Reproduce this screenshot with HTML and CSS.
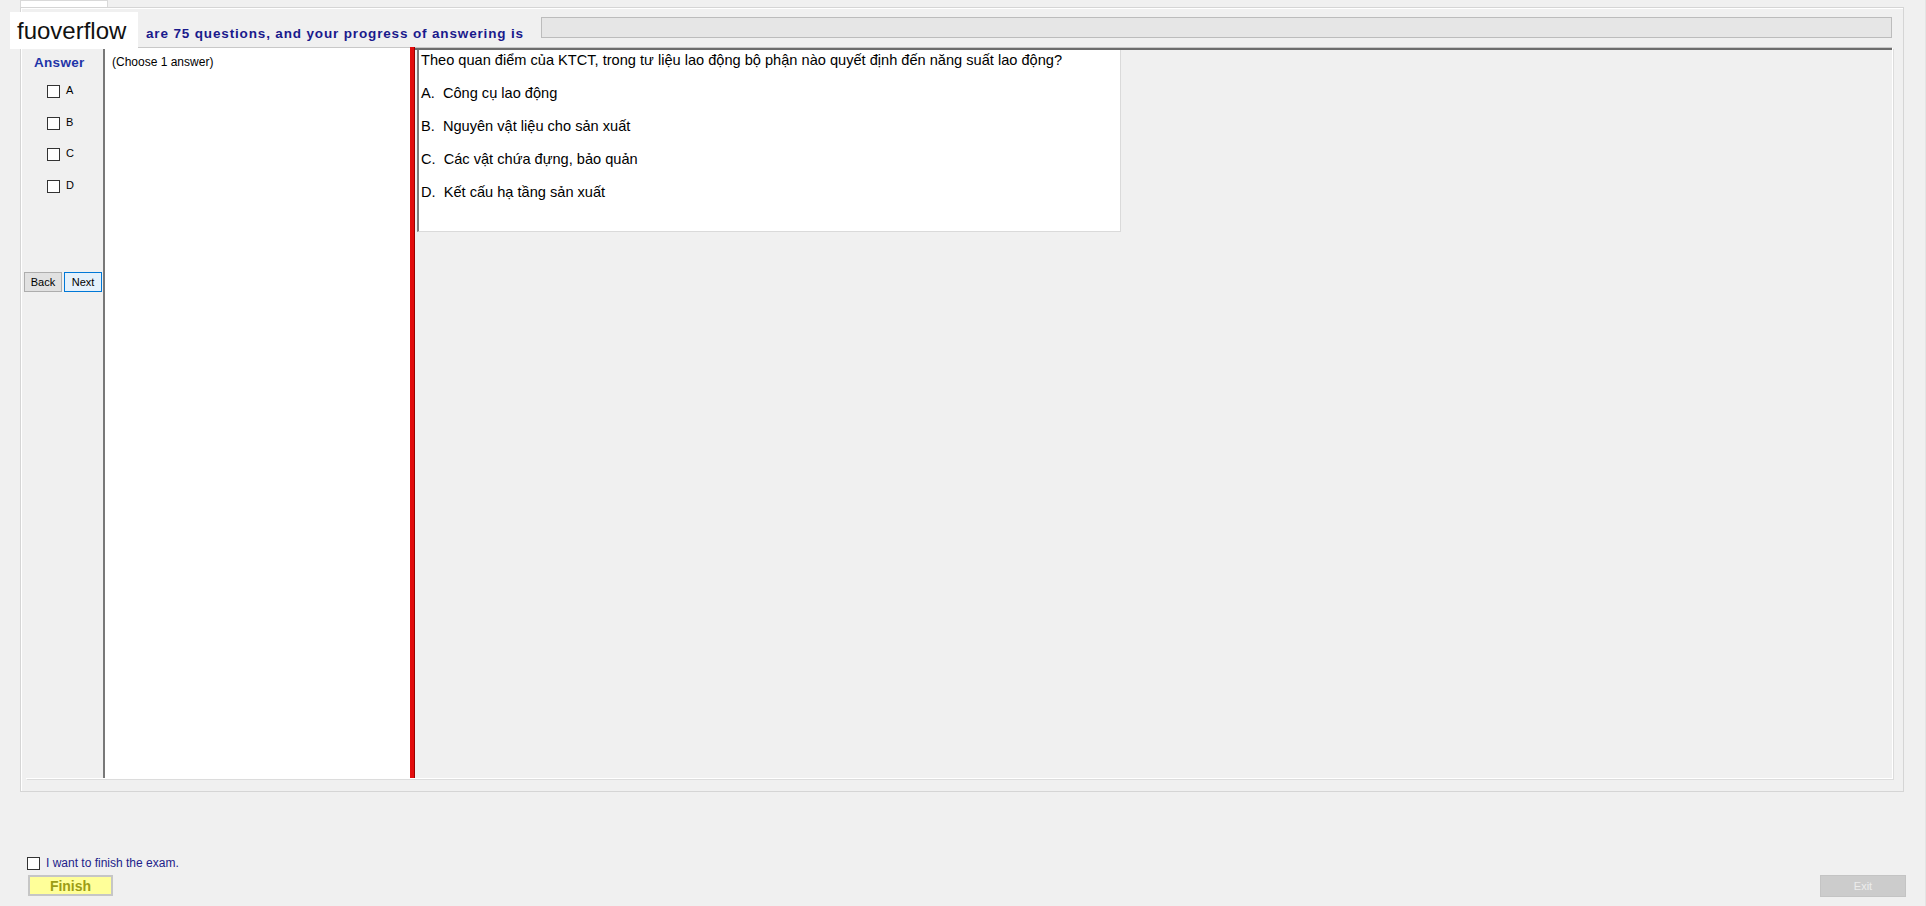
FILE: index.html
```html
<!DOCTYPE html>
<html lang="vi">

<head>
    <meta charset="UTF-8">
    <meta name="viewport" content="width=device-width, initial-scale=1.0">
    <title>Exam</title>
    <link rel="stylesheet" href="styles.css">
</head>

<body>
    <div class="page">
        <div class="tabstrip">
            <div class="tab"></div>
        </div>

        <div class="group">
            <div class="header">
                <span class="title">are 75 questions, and your progress of answering is</span>
                <div class="progress"></div>
            </div>

            <div class="frame">
                <div class="answers">
                    <div class="answers-label">Answer</div>
                    <div class="pick-list">
                        <label class="pick"><span class="box"></span>A</label>
                        <label class="pick"><span class="box"></span>B</label>
                        <label class="pick"><span class="box"></span>C</label>
                        <label class="pick"><span class="box"></span>D</label>
                    </div>
                    <div class="nav">
                        <button class="btn">Back</button>
                        <button class="btn btn-next">Next</button>
                    </div>
                </div>

                <div class="choose">(Choose 1 answer)</div>
                <div class="splitter"></div>

                <div class="content">
                    <div class="question">
                        <p class="q-text">Theo quan điểm của KTCT, trong tư liệu lao động bộ phận nào quyết định đến năng suất lao động?</p>
                        <p class="opt">A.  Công cụ lao động</p>
                        <p class="opt">B.  Nguyên vật liệu cho sản xuất</p>
                        <p class="opt">C.  Các vật chứa đựng, bảo quản</p>
                        <p class="opt">D.  Kết cấu hạ tầng sản xuất</p>
                    </div>
                </div>
            </div>
        </div>

        <div class="footer">
            <div class="finish-col">
                <label class="confirm"><span class="box"></span>I want to finish the exam.</label>
                <button class="finish">Finish</button>
            </div>
            <button class="exit">Exit</button>
        </div>

        <div class="watermark">fuoverflow</div>
    </div>
</body>

</html>
```

FILE: styles.css
```css
* {
    box-sizing: border-box;
}

body {
    margin: 0;
    background-color: #f0f0f0;
    font-family: "Liberation Sans", Arial, sans-serif;
    color: #000;
}

.page {
    position: relative;
    width: 1926px;
    height: 906px;
    padding: 0 21px 0 20px;
    overflow: hidden;
    border-right: 1px solid #e4e4e4;
}

.tabstrip {
    height: 7px;
}

.tab {
    width: 88px;
    height: 7px;
    background-color: #fff;
    border: 1px solid #d9d9d9;
    border-bottom: none;
}

.group {
    height: 785px;
    border: 1px solid #d5d5d5;
    box-shadow: inset 1px 1px 0 #fff;
    padding: 0 11px 13px 4px;
}

.header {
    display: flex;
    align-items: flex-start;
    height: 39px;
}

.title {
    margin: 18px 0 0 121px;
    font-size: 13.5px;
    font-weight: bold;
    line-height: 16px;
    letter-spacing: 0.85px;
    color: #1a1a8c;
    white-space: nowrap;
}

.progress {
    width: 1351px;
    height: 21px;
    margin: 9px 0 0 auto;
    background-color: #e6e6e6;
    border: 1px solid #bcbcbc;
}

.frame {
    display: flex;
    height: 731px;
    box-shadow: 1px 1px 0 #fff, 2px 2px 0 #dcdcdc;
}

/* answer column */
.answers {
    width: 78px;
    padding-top: 8px;
}

.answers-label {
    padding-left: 9px;
    font-size: 13.5px;
    font-weight: bold;
    line-height: 16px;
    letter-spacing: 0.3px;
    color: #1f35a8;
}

.pick-list {
    margin-top: 14px;
    padding-left: 22px;
}

.pick {
    display: flex;
    align-items: flex-start;
    gap: 6px;
    height: 31.5px;
    font-size: 11px;
    line-height: 11px;
}

.box {
    display: block;
    width: 13px;
    height: 13px;
    border: 1px solid #333;
    background-color: #fff;
}

.nav {
    display: flex;
    gap: 2px;
    margin: 61px 0 0 -1px;
}

.btn {
    width: 38px;
    height: 20px;
    padding: 0;
    font-family: "Liberation Sans", Arial, sans-serif;
    font-size: 11px;
    color: #000;
    background-color: #e1e1e1;
    border: 1px solid #adadad;
}

.btn-next {
    background-color: #e5f1fb;
    border-color: #0078d7;
}

/* middle panels */
.choose {
    width: 307px;
    padding: 7px 0 0 7px;
    background-color: #fff;
    border-left: 2px solid #787878;
    border-top: 1px solid #c8c8c8;
    font-size: 12px;
    line-height: 14px;
}

.splitter {
    width: 5px;
    background-color: #e30c0c;
    border-right: 1px solid #9a0000;
}

.content {
    flex: 1;
    padding: 2px 0 0 2px;
    border-top: 1px solid #c8c8c8;
    box-shadow: inset 0 2px 0 #6d6d6d;
}

.question {
    width: 704px;
    height: 182px;
    padding: 1px 0 0 2px;
    background-color: #fff;
    border-left: 2px solid #7d7d7d;
    border-right: 1px solid #dadada;
    border-bottom: 1px solid #dadada;
    font-size: 14.6px;
    line-height: 18px;
}

.q-text {
    margin: 0;
    white-space: nowrap;
}

.opt {
    margin: 15px 0 0;
    white-space: pre;
}

/* bottom bar */
.footer {
    display: flex;
    justify-content: space-between;
    align-items: flex-start;
    margin: 64px -2px 0 0;
    padding-left: 7px;
}

.confirm {
    display: flex;
    align-items: center;
    gap: 6px;
    font-size: 12px;
    line-height: 14px;
    color: #22228a;
}

.finish {
    display: block;
    width: 85px;
    height: 21px;
    margin: 5px 0 0 1px;
    padding: 0;
    background-color: #ffff99;
    border: 2px solid #c6c6c6;
    font-family: "Liberation Sans", Arial, sans-serif;
    font-size: 14px;
    font-weight: bold;
    color: #9c9c14;
}

.exit {
    width: 86px;
    height: 22px;
    margin-top: 19px;
    padding: 0;
    background-color: #cccccc;
    border: 1px solid #c4c4c4;
    font-family: "Liberation Sans", Arial, sans-serif;
    font-size: 11px;
    color: #ececec;
}

.watermark {
    position: absolute;
    left: 10px;
    top: 12px;
    width: 128px;
    height: 37px;
    padding-left: 7px;
    background-color: #fff;
    font-size: 24px;
    line-height: 37px;
    color: #111;
}
```
